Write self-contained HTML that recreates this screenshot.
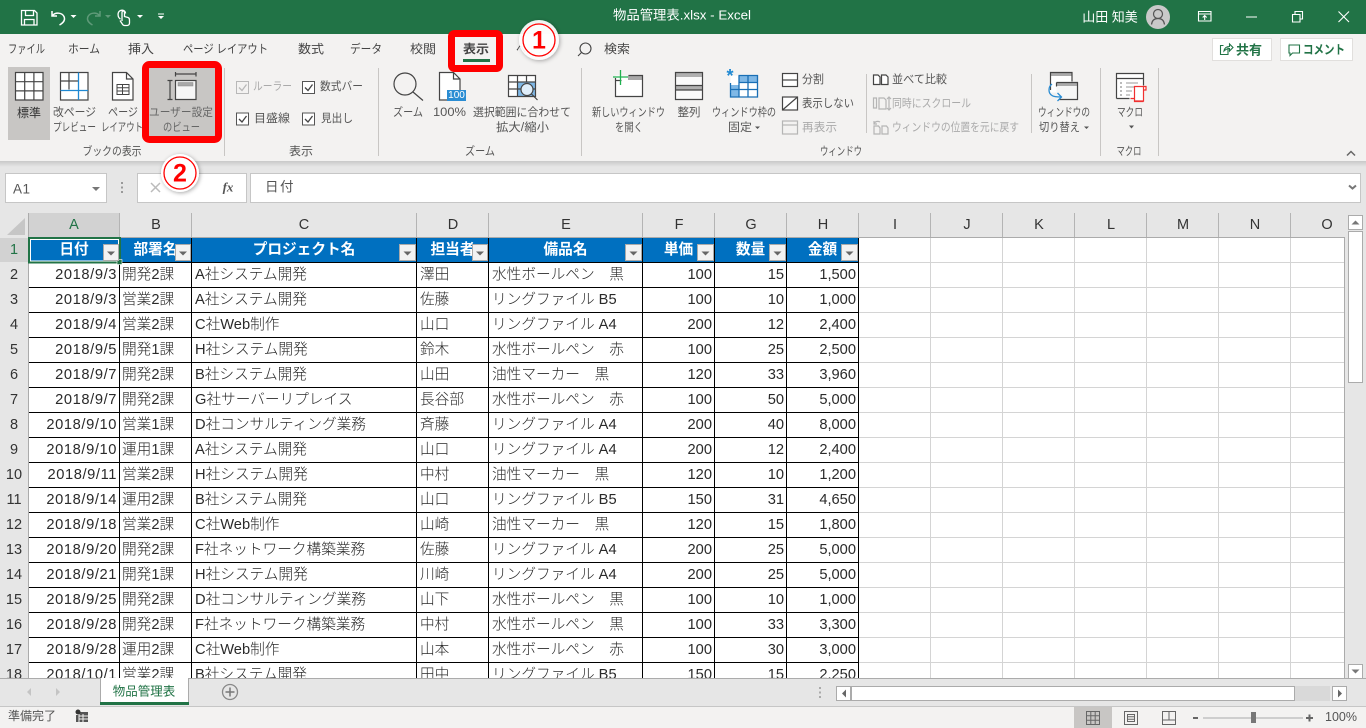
<!DOCTYPE html>
<html lang="ja"><head><meta charset="utf-8"><title>物品管理表.xlsx - Excel</title>
<style>
html,body{margin:0;padding:0;background:#fff}
body{width:1366px;height:728px;overflow:hidden;position:relative;font-family:"Liberation Sans","Noto Sans CJK JP",sans-serif}
#grid{position:absolute;left:29px;top:238px;width:1316px;height:440px;overflow:hidden;background-color:#fff;
background-image:repeating-linear-gradient(to right,transparent 0,transparent 71px,#d4d4d4 71px,#d4d4d4 72px),repeating-linear-gradient(to bottom,transparent 0,transparent 24px,#d4d4d4 24px,#d4d4d4 25px);background-position:830px 0,0 0}
table{border-collapse:separate;border-spacing:0;table-layout:fixed;width:830px;position:absolute;left:0;top:0;font-family:"Liberation Sans","Noto Sans CJK JP",sans-serif;font-size:14.67px;font-weight:300;color:#2a2a2a}
td{box-sizing:border-box;height:25px;padding:0 2px 0 3px;border-right:1px solid #000;border-bottom:1px solid #000;white-space:nowrap;overflow:hidden;line-height:23px;background:#fff}
td.r{text-align:right;padding-right:2px}
td.d{letter-spacing:.6px}
td.p{padding-left:2px}
tr.h td{background:#0070c0;color:#fff;font-weight:700;text-align:center;padding:0;overflow:visible}
svg{position:absolute;left:0;top:0;stroke-width:1.2}
svg text{font-family:"Liberation Sans","Noto Sans CJK JP",sans-serif;font-size:11.5px;fill:#444;dominant-baseline:central;stroke:none}
.c{text-anchor:middle}
.dis{fill:#aaa}
.tab{font-size:12px;fill:#444}
.lab{font-size:11.5px;fill:#555}
.rh{font-size:14.5px;fill:#333;text-anchor:middle}
.ic{fill:none;stroke:#444}
.icd{fill:none;stroke:#b5b5b5}
.w{fill:none;stroke:#fff}
.fb{fill:#f2f2f2;stroke:#aaa;stroke-width:1}
.ft{fill:#666}
</style></head><body>

<div id="grid">
<table>
<colgroup><col style="width:91px"><col style="width:72px"><col style="width:225px"><col style="width:72px"><col style="width:154px"><col style="width:72px"><col style="width:72px"><col style="width:72px"></colgroup>
<tr class="h"><td>日付</td><td>部署名</td><td>プロジェクト名</td><td>担当者</td><td>備品名</td><td>単価</td><td>数量</td><td>金額</td></tr>
<tr><td class="r d">2018/9/3</td><td class="p">開発2課</td><td>A社システム開発</td><td>澤田</td><td>水性ボールペン　黒</td><td class="r">100</td><td class="r">15</td><td class="r">1,500</td></tr>
<tr><td class="r d">2018/9/3</td><td class="p">営業2課</td><td>A社システム開発</td><td>佐藤</td><td>リングファイル B5</td><td class="r">100</td><td class="r">10</td><td class="r">1,000</td></tr>
<tr><td class="r d">2018/9/4</td><td class="p">営業2課</td><td>C社Web制作</td><td>山口</td><td>リングファイル A4</td><td class="r">200</td><td class="r">12</td><td class="r">2,400</td></tr>
<tr><td class="r d">2018/9/5</td><td class="p">開発1課</td><td>H社システム開発</td><td>鈴木</td><td>水性ボールペン　赤</td><td class="r">100</td><td class="r">25</td><td class="r">2,500</td></tr>
<tr><td class="r d">2018/9/7</td><td class="p">開発2課</td><td>B社システム開発</td><td>山田</td><td>油性マーカー　黒</td><td class="r">120</td><td class="r">33</td><td class="r">3,960</td></tr>
<tr><td class="r d">2018/9/7</td><td class="p">開発2課</td><td>G社サーバーリプレイス</td><td>長谷部</td><td>水性ボールペン　赤</td><td class="r">100</td><td class="r">50</td><td class="r">5,000</td></tr>
<tr><td class="r d">2018/9/10</td><td class="p">営業1課</td><td>D社コンサルティング業務</td><td>斉藤</td><td>リングファイル A4</td><td class="r">200</td><td class="r">40</td><td class="r">8,000</td></tr>
<tr><td class="r d">2018/9/10</td><td class="p">運用1課</td><td>A社システム開発</td><td>山口</td><td>リングファイル A4</td><td class="r">200</td><td class="r">12</td><td class="r">2,400</td></tr>
<tr><td class="r d">2018/9/11</td><td class="p">営業2課</td><td>H社システム開発</td><td>中村</td><td>油性マーカー　黒</td><td class="r">120</td><td class="r">10</td><td class="r">1,200</td></tr>
<tr><td class="r d">2018/9/14</td><td class="p">運用2課</td><td>B社システム開発</td><td>山口</td><td>リングファイル B5</td><td class="r">150</td><td class="r">31</td><td class="r">4,650</td></tr>
<tr><td class="r d">2018/9/18</td><td class="p">営業2課</td><td>C社Web制作</td><td>山崎</td><td>油性マーカー　黒</td><td class="r">120</td><td class="r">15</td><td class="r">1,800</td></tr>
<tr><td class="r d">2018/9/20</td><td class="p">開発2課</td><td>F社ネットワーク構築業務</td><td>佐藤</td><td>リングファイル A4</td><td class="r">200</td><td class="r">25</td><td class="r">5,000</td></tr>
<tr><td class="r d">2018/9/21</td><td class="p">開発1課</td><td>H社システム開発</td><td>川崎</td><td>リングファイル A4</td><td class="r">200</td><td class="r">25</td><td class="r">5,000</td></tr>
<tr><td class="r d">2018/9/25</td><td class="p">開発2課</td><td>D社コンサルティング業務</td><td>山下</td><td>水性ボールペン　黒</td><td class="r">100</td><td class="r">10</td><td class="r">1,000</td></tr>
<tr><td class="r d">2018/9/28</td><td class="p">開発2課</td><td>F社ネットワーク構築業務</td><td>中村</td><td>水性ボールペン　黒</td><td class="r">100</td><td class="r">33</td><td class="r">3,300</td></tr>
<tr><td class="r d">2018/9/28</td><td class="p">運用2課</td><td>C社Web制作</td><td>山本</td><td>水性ボールペン　赤</td><td class="r">100</td><td class="r">30</td><td class="r">3,000</td></tr>
<tr><td class="r d">2018/10/1</td><td class="p">営業2課</td><td>B社システム開発</td><td>田中</td><td>リングファイル B5</td><td class="r">150</td><td class="r">15</td><td class="r">2,250</td></tr>
</table>
</div>

<svg width="1366" height="728" viewBox="0 0 1366 728">
<defs>
<filter id="sh" x="-30%" y="-30%" width="160%" height="160%"><feDropShadow dx="1" dy="1" stdDeviation="2" flood-color="#000" flood-opacity=".35"/></filter>
<linearGradient id="rs" x1="0" y1="0" x2="0" y2="1"><stop offset="0" stop-color="#c8c8c8"/><stop offset="1" stop-color="#e6e6e6"/></linearGradient>
</defs>

<!-- title bar -->
<rect width="1366" height="34" fill="#217346"/>
<path class="w" stroke-width="1.300" d="M21.500 10.500h13l2.500 2.500v12h-15.500zM25.500 10.500v5h8v-5M24.500 25v-5.500h9.500v5.500"/>
<path class="w" stroke-width="1.500" d="M52 11v5h5M52.500 15.500c3-3.500 9.500-3 11.500 1 1.500 3.500-1 6.500-4.500 8.500"/>
<path fill="#fff" d="M70.500 15h6l-3 3z"/>
<path fill="none" stroke="#5f9a79" stroke-width="1.500" d="M100 11v5h-5M99.500 15.500c-3-3.500-9.500-3-11.500 1-1.500 3.500 1 6.500 4.500 8.500"/>
<path fill="#5f9a79" d="M105 15h6l-3 3z"/>
<path class="w" stroke-width="1.300" d="M120.500 19c-3-1.500-3.500-7 0-8.500 2.500-1 5 .5 5 3M122 21v-8.500c0-2 2.500-2 2.500 0v4l3.500 1c1.500.5 1.500 1.500 1.500 3v2.500c0 1.500-1 2.500-2.500 2.500h-2.500c-1 0-2-1-2.500-2l-2-3"/>
<path fill="#fff" d="M137 15h6l-3 3z"/>
<path fill="#fff" d="M158 13.500h6v1h-6zM158 16h6l-3 3z"/>
<text x="682" y="15" class="c" textLength="138" lengthAdjust="spacingAndGlyphs" style="font-size:13px;fill:#fff">物品管理表.xlsx  -  Excel</text>
<text x="1110" y="17" class="c" style="font-size:13px;fill:#fff">山田 知美</text>
<circle cx="1158" cy="17" r="12" fill="#c9c9c9"/>
<circle cx="1158" cy="14" r="4.500" fill="none" stroke="#555" stroke-width="1.200"/>
<path d="M1151.500 24.500c.5-4 3-6 6.500-6s6 2 6.500 6" fill="none" stroke="#555" stroke-width="1.200"/>
<path class="w" stroke-width="1.100" d="M1198.500 11.500h12.500v9.500h-12.500zM1198.500 14h12.500M1204.700 20v-4.500M1202.700 17.500l2-2 2 2"/>
<path fill="#fff" d="M1246 16.500h11v1h-11z"/>
<path class="w" stroke-width="1.100" d="M1292.500 14.500h7.500v7.500h-7.500zM1295 14.500v-3h7.500v7.500h-2.500"/>
<path class="w" stroke-width="1.100" d="M1338.500 11.500l10.500 10.500M1349 11.500l-10.500 10.500"/>

<!-- ribbon -->
<rect y="34" width="1366" height="128" fill="#f3f2f1"/>
<rect y="162" width="1366" height="51" fill="#e6e6e6"/>
<rect y="161" width="1366" height="6" fill="url(#rs)"/>

<text x="26.500" y="49" class="tab c" textLength="37" lengthAdjust="spacingAndGlyphs">ファイル</text>
<text x="84" y="49" class="tab c" textLength="32" lengthAdjust="spacingAndGlyphs">ホーム</text>
<text x="141" y="49" class="tab c" textLength="26" lengthAdjust="spacingAndGlyphs">挿入</text>
<text x="225.500" y="49" class="tab c" textLength="85" lengthAdjust="spacingAndGlyphs">ページ レイアウト</text>
<text x="311" y="49" class="tab c" textLength="26" lengthAdjust="spacingAndGlyphs">数式</text>
<text x="366" y="49" class="tab c" textLength="32" lengthAdjust="spacingAndGlyphs">データ</text>
<text x="423" y="49" class="tab c" textLength="26" lengthAdjust="spacingAndGlyphs">校閲</text>
<text x="476" y="49" class="tab c" textLength="26" lengthAdjust="spacingAndGlyphs" style="font-weight:700">表示</text>
<rect x="463" y="59" width="27" height="3" fill="#217346"/>
<text x="531" y="49" class="tab c" textLength="30" lengthAdjust="spacingAndGlyphs">ヘルプ</text>
<circle cx="585.500" cy="48.500" r="5.500" class="ic" stroke-width="1.100" fill="none"/>
<path class="ic" stroke-width="1.100" d="M581.500 52.500l-3.500 3.500"/>
<text x="617" y="49" class="tab c" textLength="26" lengthAdjust="spacingAndGlyphs">検索</text>

<rect x="1212.500" y="38.500" width="59" height="22" fill="#fff" stroke="#e1dfdd" stroke-width="1"/>
<path fill="none" stroke="#217346" stroke-width="1.100" d="M1228 47.500v7h-7.500v-9h3M1224 51c.5-3 2.500-4.500 5.500-4.500v-2.500l3.500 3.500-3.500 3.500v-2.500c-2 0-3.500.5-5.500 2.500z"/>
<text x="1249" y="50" class="c" style="font-size:13px;font-weight:700;fill:#217346">共有</text>
<rect x="1280.500" y="38.500" width="72" height="22" fill="#fff" stroke="#e1dfdd" stroke-width="1"/>
<path fill="none" stroke="#217346" stroke-width="1.100" d="M1289 45h10.500v8h-7l-2.500 2.500v-2.500h-1z"/>
<text x="1324" y="50" class="c" textLength="42" lengthAdjust="spacingAndGlyphs" style="font-size:12.500px;font-weight:700;fill:#217346">コメント</text>

<!-- book views group -->
<rect x="8" y="67" width="42" height="73" fill="#c8c6c4"/>
<path fill="#fff" d="M15.500 72.500h27.500v27.500h-27.500z"/>
<path class="ic" d="M15.500 72.500h27.500v27.500h-27.500zM24.700 72.500v27.500M33.900 72.500v27.500M15.500 81.700h27.500M15.500 90.900h27.500"/>
<text x="29" y="113" class="c" textLength="24" lengthAdjust="spacingAndGlyphs" style="font-size:12px;fill:#333">標準</text>
<path fill="#fff" d="M60.500 72.500h27.500v27.500h-27.500z"/>
<path class="ic" d="M60.500 72.500h27.500v27.500h-27.500zM69 72.500v17M60.500 81h18"/>
<path fill="none" stroke="#1e88d2" stroke-width="1.300" d="M78.500 72.500v27.500M60.500 90.500h27.500"/>
<text x="74.500" y="113" class="c lab" textLength="43" lengthAdjust="spacingAndGlyphs">改ページ</text>
<text x="74.500" y="128" class="c lab" textLength="43" lengthAdjust="spacingAndGlyphs">プレビュー</text>
<path fill="#fff" d="M112.500 72.500h14l6.500 6.500v21h-20.500z"/>
<path class="ic" d="M112.500 72.500h14l6.500 6.500v21h-20.500zM126.500 72.500v6.500h6.500"/>
<path class="ic" stroke-width="1" d="M117 84.500h12v10h-12zM117 87.800h12M117 91h12M122.500 84.500v10"/>
<text x="123" y="113" class="c lab" textLength="30" lengthAdjust="spacingAndGlyphs">ページ</text>
<text x="122" y="128" class="c lab" textLength="42" lengthAdjust="spacingAndGlyphs">レイアウト</text>

<rect x="145.500" y="64.500" width="73" height="75" rx="4" fill="#c8c6c4" stroke="#f00" stroke-width="7"/>
<path fill="#f6f6f6" d="M175.500 80.500h20.500v19h-20.500z"/>
<path class="ic" d="M175.500 80.500h20.500v19h-20.500zM175.500 72v4.500M196 72v4.500M175.500 74h20.500M170 80.500v19M167.500 80.500h5M167.500 99.500h5"/>
<rect x="178" y="82.500" width="15" height="3.500" fill="#a8a8a8" stroke="#888" stroke-width=".5"/>
<text x="181" y="113" class="c lab" textLength="64" lengthAdjust="spacingAndGlyphs" style="fill:#666">ユーザー設定</text>
<text x="181.500" y="128" class="c lab" textLength="37" lengthAdjust="spacingAndGlyphs" style="fill:#666">のビュー</text>
<text x="112" y="152" class="c lab" textLength="59" lengthAdjust="spacingAndGlyphs">ブックの表示</text>
<path stroke="#c8c6c4" stroke-width="1" d="M224.500 68v88M378.500 68v88M581.500 68v88M1100.500 68v88M1158.500 68v88M866.500 74v59M1031.500 74v59"/>

<!-- show group -->
<rect x="236.500" y="81.500" width="12" height="12" fill="#f3f2f1" stroke="#b8b8b8" stroke-width="1"/><path fill="none" stroke="#b8b8b8" stroke-width="1.300" d="M239 87.500l3 3 4.500-6"/>
<text x="272.500" y="87" class="c dis" textLength="39" lengthAdjust="spacingAndGlyphs">ルーラー</text>
<rect x="302.500" y="81.500" width="12" height="12" fill="#fff" stroke="#555" stroke-width="1"/><path fill="none" stroke="#444" stroke-width="1.300" d="M305 87.500l3 3 4.500-6"/>
<text x="341.500" y="87" class="c lab" textLength="43" lengthAdjust="spacingAndGlyphs">数式バー</text>
<rect x="236.500" y="113" width="12" height="12" fill="#fff" stroke="#555" stroke-width="1"/><path fill="none" stroke="#444" stroke-width="1.300" d="M239 119l3 3 4.500-6"/>
<text x="272" y="119" class="c lab" textLength="36" lengthAdjust="spacingAndGlyphs">目盛線</text>
<rect x="302.500" y="113" width="12" height="12" fill="#fff" stroke="#555" stroke-width="1"/><path fill="none" stroke="#444" stroke-width="1.300" d="M305 119l3 3 4.500-6"/>
<text x="337" y="119" class="c lab" textLength="32" lengthAdjust="spacingAndGlyphs">見出し</text>
<text x="301" y="152" class="c lab" textLength="24" lengthAdjust="spacingAndGlyphs">表示</text>

<!-- zoom group -->
<circle cx="405" cy="84" r="11" class="ic" stroke="#555"/>
<path class="ic" d="M413 92l10 8.500"/>
<text x="408" y="113" class="c lab" textLength="30" lengthAdjust="spacingAndGlyphs">ズーム</text>
<path fill="#fff" d="M439.500 72.500h14l6.500 6.500v21h-20.500z"/>
<path class="ic" d="M439.500 72.500h14l6.500 6.500v21h-20.500zM453.500 72.500v6.500h6.500"/>
<rect x="447" y="90" width="19" height="11" fill="#2b8dd3"/>
<text x="456.500" y="95.500" class="c" style="font-size:10px;fill:#fff">100</text>
<text x="449.500" y="113" class="c lab" textLength="33" lengthAdjust="spacingAndGlyphs">100%</text>
<path fill="#fff" d="M508.500 75.500h27v21h-27z"/>
<rect x="518" y="82" width="17.500" height="14.500" fill="#7fb8e6"/>
<path class="ic" d="M508.500 75.500h27v21h-27zM508.500 82h27M508.500 89h27M517.500 75.500v21M526.500 75.500v7"/>
<circle cx="527" cy="89.500" r="6" fill="#dfeefa" stroke="#444"/>
<path class="ic" d="M531.500 94l6 6"/>
<text x="522" y="113" class="c lab" textLength="98" lengthAdjust="spacingAndGlyphs">選択範囲に合わせて</text>
<text x="522.500" y="128" class="c lab" textLength="53" lengthAdjust="spacingAndGlyphs">拡大/縮小</text>
<text x="480" y="152" class="c lab" textLength="30" lengthAdjust="spacingAndGlyphs">ズーム</text>

<!-- window group -->
<path fill="#fff" d="M615.500 75.500h27v21h-27z"/>
<rect x="628" y="75.500" width="14.500" height="4.500" fill="#a8a8a8"/>
<path class="ic" d="M615.500 78v18.500h27v-21h-14M615.500 80.500h6"/>
<path fill="none" stroke="#1fb14f" stroke-width="1.300" d="M613 77h15M620.500 70v15"/>
<text x="628.500" y="113" class="c lab" textLength="73" lengthAdjust="spacingAndGlyphs">新しいウィンドウ</text>
<text x="629" y="128" class="c lab" textLength="28" lengthAdjust="spacingAndGlyphs">を開く</text>
<path fill="#fafafa" d="M675.500 72.500h27v27h-27z"/>
<rect x="675.500" y="72.500" width="27" height="4.500" fill="#b0b0b0"/><rect x="675.500" y="85.500" width="27" height="4.500" fill="#b0b0b0"/>
<path class="ic" d="M675.500 72.500h27v27h-27zM675.500 85.500h27M675.500 90h27"/>
<text x="689" y="113" class="c lab" textLength="23" lengthAdjust="spacingAndGlyphs">整列</text>
<path fill="#fff" d="M730.500 75.500h27v21.500h-27z"/>
<path fill="#7fb8e6" d="M730.500 85h9v12h-9zM739 75.500h18.500v7h-18.500z"/>
<path fill="none" stroke="#1a6fb5" stroke-width="1.300" d="M730.500 83v14h27v-21.500h-19M730.500 89.500h27M739 82.500h18.500M739 75.500v21.500M748 75.500v21.500"/>
<text x="730" y="76" class="c" style="font-size:18px;font-weight:700;fill:#1e88d2">*</text>
<text x="744" y="113" class="c lab" textLength="64" lengthAdjust="spacingAndGlyphs">ウィンドウ枠の</text>
<text x="740" y="128" class="c lab" textLength="24" lengthAdjust="spacingAndGlyphs">固定</text>
<path fill="#555" d="M755 126.500h5l-2.500 2.500z"/>

<rect x="782.500" y="73.500" width="15" height="13" fill="#fff" stroke="#444"/><path class="ic" d="M782.500 80h15"/>
<text x="813" y="80" class="c lab" textLength="22" lengthAdjust="spacingAndGlyphs">分割</text>
<rect x="782.500" y="97" width="15" height="13" fill="#fff" stroke="#444"/><path class="ic" d="M782.500 110l15-13"/>
<text x="828" y="104" class="c lab" textLength="52" lengthAdjust="spacingAndGlyphs">表示しない</text>
<rect x="782.500" y="121" width="15" height="13" fill="#f3f2f1" stroke="#b5b5b5"/><path class="icd" d="M782.500 125h15"/>
<text x="819.500" y="128" class="c dis" textLength="35" lengthAdjust="spacingAndGlyphs">再表示</text>

<path fill="#fff" stroke="#444" stroke-width="1.200" d="M873.500 75v9.500h6.500v-7.500l-2-2zM881.500 75v9.500h6.500v-7.500l-2-2z"/>
<text x="919.500" y="80" class="c lab" textLength="55" lengthAdjust="spacingAndGlyphs">並べて比較</text>
<path class="icd" d="M873.500 98h3v10h-3zM879 98h5l2 2v9h-7zM889 97v13M887 99l2-2 2 2M887 108l2 2 2-2"/>
<text x="931.500" y="104" class="c dis" textLength="79" lengthAdjust="spacingAndGlyphs">同時にスクロール</text>
<path class="icd" d="M874 129v5h6v-6l-1.500-2h-4.500zM882 129v5h6v-6l-1.500-2h-4.500zM874 124c1-3 4-3 6-2M874 121v3h3"/>
<text x="955.500" y="128" class="c dis" textLength="127" lengthAdjust="spacingAndGlyphs">ウィンドウの位置を元に戻す</text>

<path fill="#fff" d="M1050.500 72.500h22v20h-22z"/>
<rect x="1050.500" y="72.500" width="22" height="3.500" fill="#aaa"/>
<path class="ic" d="M1050.500 90v-17.500h21.500v9"/>
<path fill="#f6f6f6" d="M1056.500 82.500h21v17h-21z"/>
<rect x="1056.500" y="82.500" width="21" height="3.500" fill="#aaa"/>
<path class="ic" d="M1056.500 82.500h21v17h-18M1056.500 82.500v4"/>
<path fill="none" stroke="#2b8dd3" stroke-width="1.300" d="M1052 84c-4 3-4 9 0 11.500 2 1.500 6 1.500 9 1.500M1057.500 93l4 4-4 4"/>
<text x="1064" y="113" class="c lab" textLength="52" lengthAdjust="spacingAndGlyphs">ウィンドウの</text>
<text x="1059.500" y="128" class="c lab" textLength="41" lengthAdjust="spacingAndGlyphs">切り替え</text>
<path fill="#555" d="M1084 126.500h5l-2.500 2.500z"/>
<text x="841" y="152" class="c lab" textLength="42" lengthAdjust="spacingAndGlyphs">ウィンドウ</text>

<path fill="#fff" d="M1116.500 73.500h27v25h-27z"/>
<path class="ic" d="M1116.500 98.500v-25h27v12M1116.500 78.500h27M1116.500 98.500h13"/>
<path stroke="#777" stroke-dasharray="2 2" stroke-width="1" d="M1120 83h4M1120 87h4M1120 91h4M1120 95h4"/>
<path stroke="#999" stroke-width="1" d="M1126 83h12M1126 87h8M1126 91h6M1126 95h4"/>
<path fill="#fff" stroke="#f03030" stroke-width="1.200" d="M1134.500 86.500h9v14.500h-9zM1143.500 86.500h2.500v3.500h-2.500M1130.500 98.500h4v3h9"/>
<text x="1130" y="113" class="c lab" textLength="26" lengthAdjust="spacingAndGlyphs">マクロ</text>
<path fill="#555" d="M1129 125.500h5l-2.500 3z"/>
<text x="1129" y="152" class="c lab" textLength="25" lengthAdjust="spacingAndGlyphs">マクロ</text>
<path fill="none" stroke="#666" stroke-width="1.500" d="M1347 155.500l4-4 4 4"/>

<!-- red box tab -->
<rect x="451.500" y="33.500" width="48" height="35" rx="3" fill="none" stroke="#f00" stroke-width="7"/>

<!-- formula bar -->
<rect x="5.500" y="173.500" width="101" height="29" fill="#fff" stroke="#c6c6c6" stroke-width="1"/>
<text x="13" y="189" style="font-size:13.500px;fill:#555;letter-spacing:.5px">A1</text>
<path fill="#777" d="M92 187h8l-4 4z"/>
<path stroke="#999" stroke-width="2" stroke-dasharray="2 2.500" d="M122 182v11"/>
<rect x="137.500" y="173.500" width="109" height="29" fill="#fff" stroke="#c6c6c6" stroke-width="1"/>
<path fill="none" stroke="#bbb" stroke-width="1.500" d="M151 183l9 9M160 183l-9 9"/>
<text x="228" y="187" class="c" style="font-family:'Liberation Serif',serif;font-style:italic;font-size:13px;font-weight:700;fill:#555">fx</text>
<rect x="250.500" y="173.500" width="1110" height="29" fill="#fff" stroke="#c6c6c6" stroke-width="1"/>
<text x="265" y="187" style="font-size:13.500px;fill:#555;letter-spacing:1.500px">日付</text>
<path fill="none" stroke="#777" stroke-width="2" d="M1349 185.500l3.500 3 3.500-3"/>

<!-- circle 2 -->
<circle cx="180" cy="173" r="19" fill="#fff" filter="url(#sh)"/>
<circle cx="180" cy="173" r="16" fill="#fff" stroke="#f00" stroke-width="1.300"/>
<text x="180" y="173.500" class="c" style="font-size:25px;font-weight:700;fill:#f00">2</text>
<!-- circle 1 -->
<circle cx="539" cy="40" r="20" fill="#fff" fill-opacity=".92" filter="url(#sh)"/>
<circle cx="539" cy="40" r="16" fill="#fff" fill-opacity=".7" stroke="#f00" stroke-width="1.300"/>
<text x="539" y="40.500" class="c" style="font-size:25px;font-weight:700;fill:#f00">1</text>

<!-- column header -->
<rect y="213" width="1346" height="25" fill="#e6e6e6"/>
<path fill="#c6c6c6" d="M25 218v17h-18z"/>
<rect x="29" y="213" width="90" height="24" fill="#d2d2d2"/>
<path stroke="#b4b4b4" stroke-width="1" d="M119.500 213v24M191.500 213v24M416.500 213v24M488.500 213v24M642.500 213v24M714.500 213v24M786.500 213v24M858.500 213v24M930.500 213v24M1002.500 213v24M1074.500 213v24M1146.500 213v24M1218.500 213v24M1290.500 213v24"/>
<path stroke="#ababab" stroke-width="1" d="M29 237.500h1317"/>
<g>
<text x="74" y="225" class="c" style="font-size:14.500px;fill:#217346">A</text>
<text x="156" y="225" class="c" style="font-size:14.500px;fill:#333">B</text>
<text x="304" y="225" class="c" style="font-size:14.500px;fill:#333">C</text>
<text x="453" y="225" class="c" style="font-size:14.500px;fill:#333">D</text>
<text x="566" y="225" class="c" style="font-size:14.500px;fill:#333">E</text>
<text x="679" y="225" class="c" style="font-size:14.500px;fill:#333">F</text>
<text x="751" y="225" class="c" style="font-size:14.500px;fill:#333">G</text>
<text x="823" y="225" class="c" style="font-size:14.500px;fill:#333">H</text>
<text x="895" y="225" class="c" style="font-size:14.500px;fill:#333">I</text>
<text x="967" y="225" class="c" style="font-size:14.500px;fill:#333">J</text>
<text x="1039" y="225" class="c" style="font-size:14.500px;fill:#333">K</text>
<text x="1111" y="225" class="c" style="font-size:14.500px;fill:#333">L</text>
<text x="1183" y="225" class="c" style="font-size:14.500px;fill:#333">M</text>
<text x="1255" y="225" class="c" style="font-size:14.500px;fill:#333">N</text>
<text x="1327" y="225" class="c" style="font-size:14.500px;fill:#333">O</text>
</g>

<!-- row header -->
<rect y="238" width="28" height="441" fill="#e6e6e6"/>
<rect y="238" width="28" height="24" fill="#d2d2d2"/>
<path stroke="#ababab" stroke-width="1" d="M28.500 213v466"/>
<text x="14" y="250" class="rh" style="fill:#217346">1</text>
<text x="14" y="275" class="rh">2</text><text x="14" y="300" class="rh">3</text><text x="14" y="325" class="rh">4</text><text x="14" y="350" class="rh">5</text><text x="14" y="375" class="rh">6</text><text x="14" y="400" class="rh">7</text><text x="14" y="425" class="rh">8</text><text x="14" y="450" class="rh">9</text><text x="14" y="475" class="rh">10</text><text x="14" y="500" class="rh">11</text><text x="14" y="525" class="rh">12</text><text x="14" y="550" class="rh">13</text><text x="14" y="575" class="rh">14</text><text x="14" y="600" class="rh">15</text><text x="14" y="625" class="rh">16</text><text x="14" y="650" class="rh">17</text><text x="14" y="675" class="rh">18</text>

<!-- selection -->
<rect x="29" y="238" width="91" height="24.500" fill="none" stroke="#217346" stroke-width="2"/>
<rect x="30.500" y="239.500" width="88" height="21.500" fill="none" stroke="#fff" stroke-width="1"/>
<rect x="117" y="259.500" width="5" height="5" fill="#217346" stroke="#fff" stroke-width=".6"/>

<!-- filter buttons -->
<rect class="fb" x="103.500" y="244.500" width="15" height="16"/><path class="ft" d="M107 251.500h8l-4 4z"/>
<rect class="fb" x="175.500" y="244.500" width="15" height="16"/><path class="ft" d="M179 251.500h8l-4 4z"/>
<rect class="fb" x="399.500" y="244.500" width="16" height="16"/><path class="ft" d="M403.500 251.500h8l-4 4z"/>
<rect class="fb" x="472.500" y="244.500" width="15" height="16"/><path class="ft" d="M476 251.500h8l-4 4z"/>
<rect class="fb" x="625.500" y="244.500" width="16" height="16"/><path class="ft" d="M629.500 251.500h8l-4 4z"/>
<rect class="fb" x="697.500" y="244.500" width="16" height="16"/><path class="ft" d="M701.500 251.500h8l-4 4z"/>
<rect class="fb" x="769.500" y="244.500" width="16" height="16"/><path class="ft" d="M773.500 251.500h8l-4 4z"/>
<rect class="fb" x="841.500" y="244.500" width="16" height="16"/><path class="ft" d="M845.500 251.500h8l-4 4z"/>

<!-- vertical scrollbar -->
<rect x="1345" y="213" width="21" height="466" fill="#e6e6e6"/>
<path stroke="#ababab" stroke-width="1" d="M1344.500 238v441"/>
<rect x="1348.500" y="215.500" width="14" height="14" fill="#fff" stroke="#ababab" stroke-width="1"/><path fill="#777" d="M1351.500 224.500h8l-4-4z"/>
<rect x="1348.500" y="231.500" width="14" height="151" fill="#fff" stroke="#ababab" stroke-width="1"/>
<rect x="1348.500" y="664.500" width="14" height="14" fill="#fff" stroke="#ababab" stroke-width="1"/><path fill="#777" d="M1351.500 669.500h8l-4 4z"/>

<!-- sheet tabs -->
<rect y="679" width="1366" height="28" fill="#e6e6e6"/>
<path stroke="#ababab" stroke-width="1" d="M0 678.500h100M189 678.500h1177"/>
<path fill="#fff" d="M100 678h89v24h-89z"/>
<path stroke="#ababab" fill="none" stroke-width="1" d="M100.500 702v-24M188.500 678v24"/>
<rect x="100" y="702" width="89" height="3" fill="#217346"/>
<text x="144" y="691.500" class="c" style="font-size:12.500px;fill:#217346">物品管理表</text>
<circle cx="230" cy="692" r="7.500" fill="none" stroke="#888" stroke-width="1.300"/>
<path stroke="#777" stroke-width="1.500" d="M225.500 692h9M230 687.500v9"/>
<path fill="#c4c4c4" d="M31 688v8l-4-4zM56 688v8l4-4z"/>
<path stroke="#aaa" stroke-width="2" stroke-dasharray="2 2.500" d="M820 687v11"/>
<rect x="836.500" y="686.500" width="14" height="14" fill="#fff" stroke="#ababab" stroke-width="1"/><path fill="#666" d="M846 689.500v8l-4-4z"/>
<rect x="851" y="686" width="479" height="15" fill="#d9d9d9"/>
<rect x="851.500" y="686.500" width="443" height="14" fill="#fff" stroke="#ababab" stroke-width="1"/>
<rect x="1332.500" y="686.500" width="14" height="14" fill="#fff" stroke="#ababab" stroke-width="1"/><path fill="#666" d="M1338 689.500v8l4-4z"/>

<!-- status -->
<rect y="707" width="1366" height="21" fill="#f3f2f1"/>
<path stroke="#c6c6c6" stroke-width="1" d="M0 706.500h1366"/>
<text x="32" y="716" class="c" style="font-size:12px;fill:#555">準備完了</text>
<path fill="#555" d="M78 712h10v10h-12v-7h2z"/><circle cx="78" cy="712" r="2.500" fill="#333"/>
<path stroke="#f3f2f1" stroke-width="1" d="M79 716h9M79 719h9M79 714v8M83 714v8"/>
<rect x="1074" y="707" width="38" height="21" fill="#c8c6c4"/>
<path fill="none" stroke="#666" stroke-width="1" d="M1086.500 711.500h13v13h-13zM1086.500 715.800h13M1086.500 720.200h13M1090.800 711.500v13M1095.200 711.500v13"/>
<path fill="none" stroke="#666" stroke-width="1" d="M1124.500 711.500h13v13h-13zM1127.500 714.500h7v7h-7zM1127.500 716.800h7M1127.500 719.200h7"/>
<path fill="none" stroke="#666" stroke-width="1" d="M1162.500 711.500h13v13h-13zM1162.500 720h13M1169 711.500v8.500"/>
<path stroke="#666" stroke-width="2" d="M1193 718h5"/>
<path stroke="#aaa" stroke-width="1" d="M1203 718h100"/>
<rect x="1251" y="712" width="5" height="11" fill="#777"/>
<path stroke="#666" stroke-width="2" d="M1306 718h7M1309.500 714.500v7"/>
<text x="1341" y="717" class="c" style="font-size:12.500px;fill:#555">100%</text>
</svg>
</body></html>
